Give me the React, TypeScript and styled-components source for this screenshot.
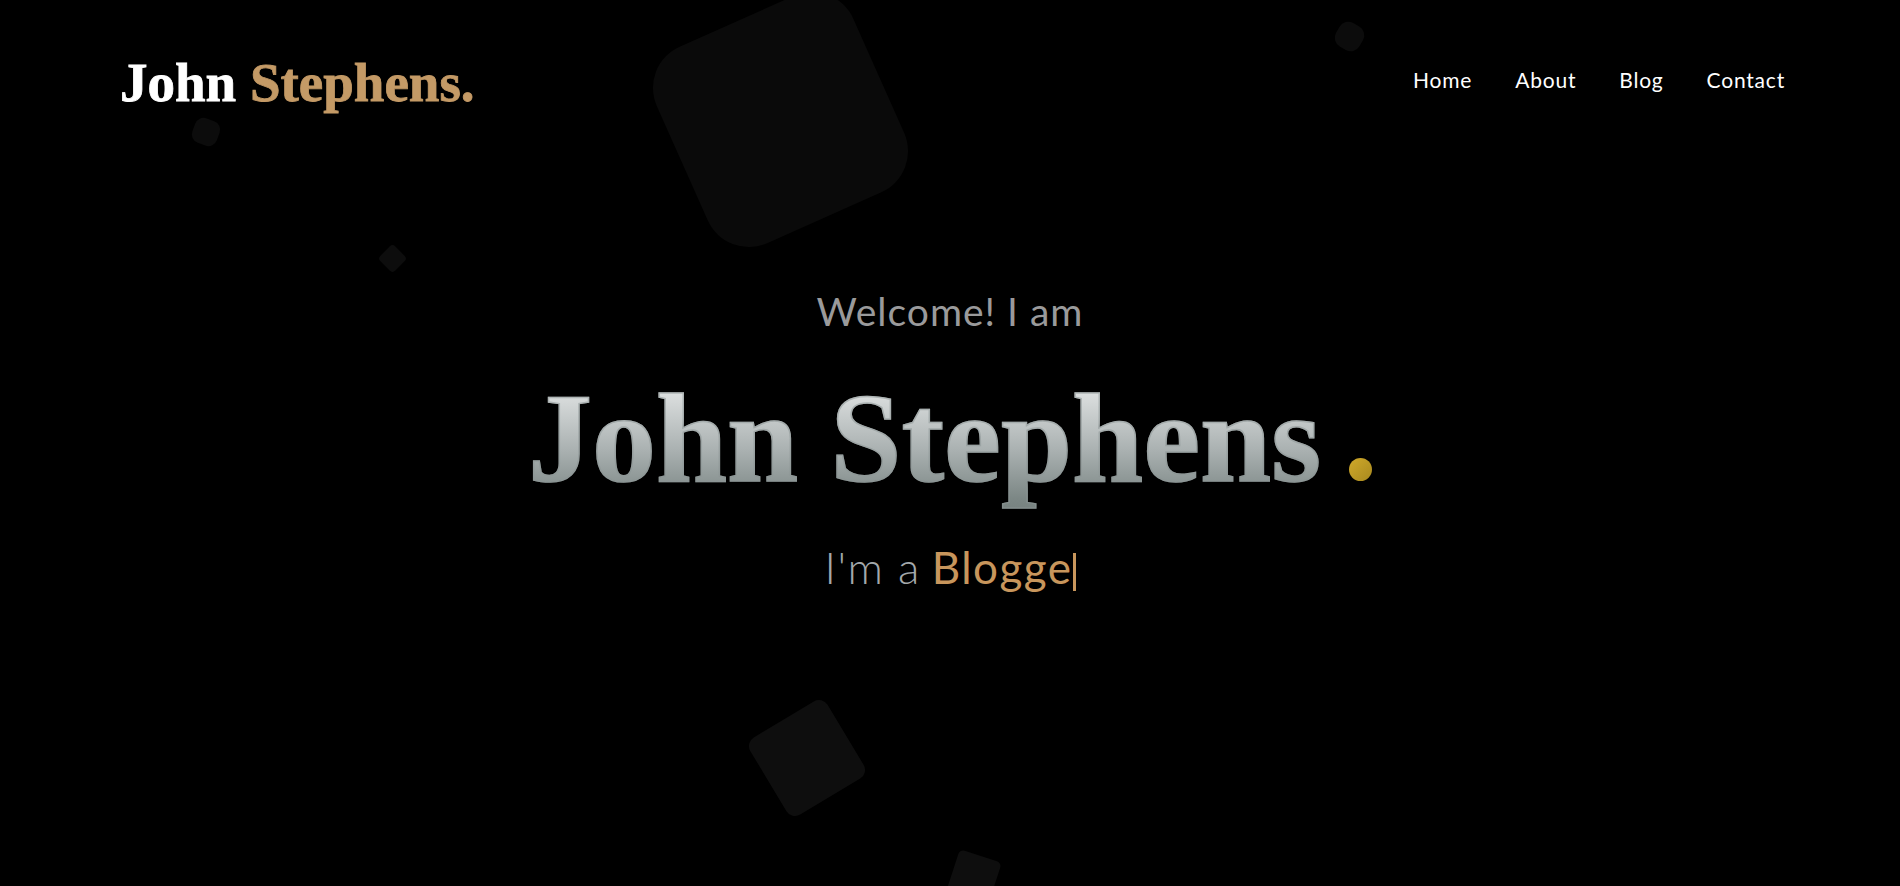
import React from "react";
import styled, { createGlobalStyle } from "styled-components";

const Global = createGlobalStyle`
  html, body { margin: 0; padding: 0; background: #000; }
  body { font-family: "Lato", "Noto Sans", sans-serif; }
  * { box-sizing: border-box; }
`;

const Page = styled.div`
  position: relative;
  width: 100%;
  height: 886px;
  overflow: hidden;
  background: #000;
  display: flex;
  flex-direction: column;
`;

const Shape = styled.div<{ $x: number; $y: number; $s: number; $r: number; $rot: number; $c: string }>`
  position: absolute;
  left: ${(p) => p.$x - p.$s / 2}px;
  top: ${(p) => p.$y - p.$s / 2}px;
  width: ${(p) => p.$s}px;
  height: ${(p) => p.$s}px;
  border-radius: ${(p) => p.$r}px;
  background: ${(p) => p.$c};
  transform: rotate(${(p) => p.$rot}deg);
  z-index: 0;
`;

const Header = styled.header`
  position: relative;
  z-index: 1;
  height: 162px;
  padding: 0 115px 0 120px;
  display: flex;
  align-items: center;
  justify-content: space-between;
`;

const Logo = styled.div`
  font-family: "Liberation Serif", "Times New Roman", serif;
  font-weight: 700;
  font-size: 55px;
  line-height: 1;
  color: #fff;
  -webkit-text-stroke: 0.8px currentColor;
  margin-top: 2px;
`;

const LogoAccent = styled.span`
  color: #c49a66;
`;

const Nav = styled.nav`
  display: flex;
  gap: 43px;
  margin-top: -4px;
`;

const NavLink = styled.a`
  font-family: "Lato", "Noto Sans", sans-serif;
  font-size: 21px;
  letter-spacing: 0.8px;
  color: #fff;
  text-decoration: none;
`;

const Hero = styled.section`
  position: relative;
  z-index: 1;
  display: flex;
  flex-direction: column;
  align-items: center;
  text-align: center;
`;

const Welcome = styled.h2`
  margin: 130px 0 0;
  font-family: "Lato", "Noto Sans", sans-serif;
  font-weight: 400;
  font-size: 39px;
  letter-spacing: 1px;
  line-height: 1;
  color: #9a9a9b;
`;

const Name = styled.h1`
  margin: 43px 0 0;
  font-family: "Liberation Serif", "Times New Roman", serif;
  font-weight: 700;
  font-size: 128px;
  line-height: 1;
  display: flex;
  align-items: baseline;
`;

const NameText = styled.span`
  display: inline-block;
  padding-bottom: 24px;
  margin-bottom: -24px;
  background: linear-gradient(180deg, #eceeee 0%, #aab1b1 50%, #7c8785 82%, #6f7a78 100%);
  -webkit-background-clip: text;
  background-clip: text;
  color: transparent;
  -webkit-text-stroke: 1.5px rgba(140, 150, 150, 0.55);
`;

const Dot = styled.span`
  display: inline-block;
  width: 23px;
  height: 23px;
  border-radius: 50%;
  margin-left: 28px;
  background: linear-gradient(135deg, #d0a92a 0%, #a8891f 100%);
`;

const Tagline = styled.p`
  margin: 43px 0 0;
  font-family: "Lato", "Noto Sans", sans-serif;
  font-weight: 300;
  font-size: 44px;
  letter-spacing: 1.5px;
  line-height: 1;
  color: #a3a8ab;
  display: flex;
  align-items: baseline;
`;

const Typed = styled.span`
  margin-left: 11px;
  font-weight: 400;
  color: #c8965c;
`;

const Cursor = styled.span`
  display: inline-block;
  width: 3px;
  height: 38px;
  margin-left: 0px;
  background: #c8965c;
  transform: translateY(7px);
`;

const shapes = [
  { x: 780, y: 119, s: 215, r: 45, rot: -24, c: "#0a0a0a" },
  { x: 206, y: 132, s: 26, r: 9, rot: 20, c: "#0c0c0c" },
  { x: 392, y: 258, s: 21, r: 4, rot: 45, c: "#0d0d0d" },
  { x: 1349, y: 36, s: 27, r: 10, rot: 30, c: "#0c0c0c" },
  { x: 807, y: 758, s: 90, r: 10, rot: -31, c: "#0e0e0e" },
  { x: 974, y: 877, s: 44, r: 5, rot: 18, c: "#0e0e0e" },
];

export default function App() {
  return (
    <>
      <Global />
      <Page>
        {shapes.map((s, i) => (
          <Shape key={i} $x={s.x} $y={s.y} $s={s.s} $r={s.r} $rot={s.rot} $c={s.c} />
        ))}
        <Header>
          <Logo>
            John <LogoAccent>Stephens.</LogoAccent>
          </Logo>
          <Nav>
            <NavLink href="#">Home</NavLink>
            <NavLink href="#">About</NavLink>
            <NavLink href="#">Blog</NavLink>
            <NavLink href="#">Contact</NavLink>
          </Nav>
        </Header>
        <Hero>
          <Welcome>Welcome! I am</Welcome>
          <Name>
            <NameText>John Stephens</NameText>
            <Dot />
          </Name>
          <Tagline>
            I'm a<Typed>Blogge</Typed>
            <Cursor />
          </Tagline>
        </Hero>
      </Page>
    </>
  );
}
